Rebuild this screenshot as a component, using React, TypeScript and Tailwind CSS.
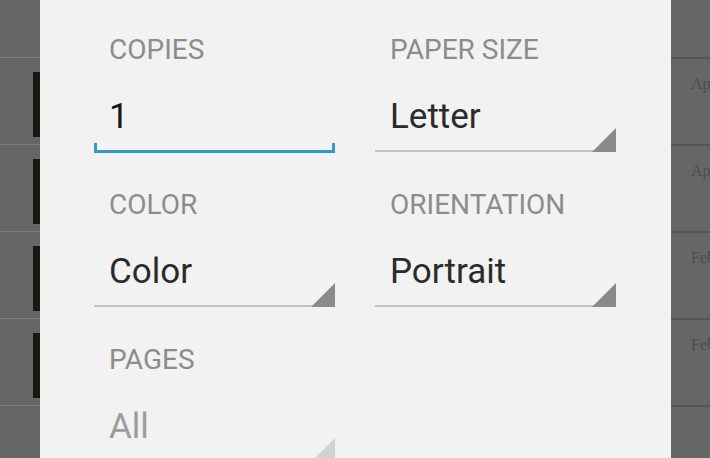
import React from "react";

interface Field {
  label: string;
  value: string;
  kind: "text" | "select";
  focused?: boolean;
  disabled?: boolean;
}

const fields: Field[] = [
  { label: "COPIES", value: "1", kind: "text", focused: true },
  { label: "PAPER SIZE", value: "Letter", kind: "select" },
  { label: "COLOR", value: "Color", kind: "select" },
  { label: "ORIENTATION", value: "Portrait", kind: "select" },
  { label: "PAGES", value: "All", kind: "select", disabled: true },
];

const sideRows = ["Apr", "Apr", "Feb", "Feb"];

function FormField({ field }: { field: Field }) {
  const isText = field.kind === "text";
  return (
    <div className="flex flex-col">
      <div className="h-[32px] pl-[15px] text-[28px] leading-[32px] text-[#8c8c8c]">{field.label}</div>
      <div className="relative mt-[31px] h-[56px]">
        <div
          className={
            field.disabled
              ? "pl-[15px] text-[35px] leading-[40px] text-[#9c9c9c]"
              : isText
              ? "pl-[15px] text-[35px] leading-[40px] text-[#151515]"
              : "pl-[15px] text-[35px] leading-[40px] text-[#2b2b2b]"
          }
        >
          {field.value}
        </div>
        {isText ? (
          <>
            <div className="absolute bottom-0 left-0 right-0 h-[3px] bg-[#3399cc]" />
            <div className="absolute bottom-0 left-0 h-[10px] w-[3px] bg-[#3399cc]" />
            <div className="absolute bottom-0 right-0 h-[10px] w-[3px] bg-[#3399cc]" />
          </>
        ) : (
          <>
            {!field.disabled && <div className="absolute bottom-[1px] left-0 right-0 h-[2px] bg-[#c2c2c2]" />}
            <svg className="absolute bottom-[1px] right-0" width="24" height="24" viewBox="0 0 24 24">
              <polygon points="24,0 24,24 0,24" fill={field.disabled ? "#d2d2d2" : "#8a8a8a"} />
            </svg>
          </>
        )}
      </div>
    </div>
  );
}

export default function App() {
  return (
    <div
      className="flex h-[458px] w-[710px] overflow-hidden bg-[#666666]"
      style={{ fontFamily: "Roboto, 'Noto Sans', sans-serif" }}
    >
      {/* list behind the dialog, left edge */}
      <div className="w-[40px] shrink-0 pt-[57px]">
        {sideRows.map((_, i) => (
          <div key={i} className="h-[87px] border-t border-[#7c7c7c] pl-[33px]">
            <div className="mt-[14px] h-[65px] w-[7px] bg-[#1a1612]" />
          </div>
        ))}
        <div className="border-t border-[#7c7c7c]" />
      </div>

      {/* print options dialog */}
      <div className="w-[631px] shrink-0 bg-[#f2f2f2] pl-[54px] pr-[55px] pt-[34px]">
        <div className="grid grid-cols-2 gap-x-[40px] gap-y-[36px]">
          {fields.map((f) => (
            <FormField key={f.label} field={f} />
          ))}
        </div>
      </div>

      {/* list behind the dialog, right edge */}
      <div className="min-w-0 flex-1 pt-[57px]" style={{ fontFamily: "'Liberation Serif', serif" }}>
        {sideRows.map((m, i) => (
          <div
            key={i}
            className="h-[87px] overflow-hidden whitespace-nowrap border-t-2 border-[#555555] pl-[20px] pt-[13px] text-[16px] text-[#4d4d4d]"
          >
            {m}
          </div>
        ))}
        <div className="border-t-2 border-[#555555]" />
      </div>
    </div>
  );
}
